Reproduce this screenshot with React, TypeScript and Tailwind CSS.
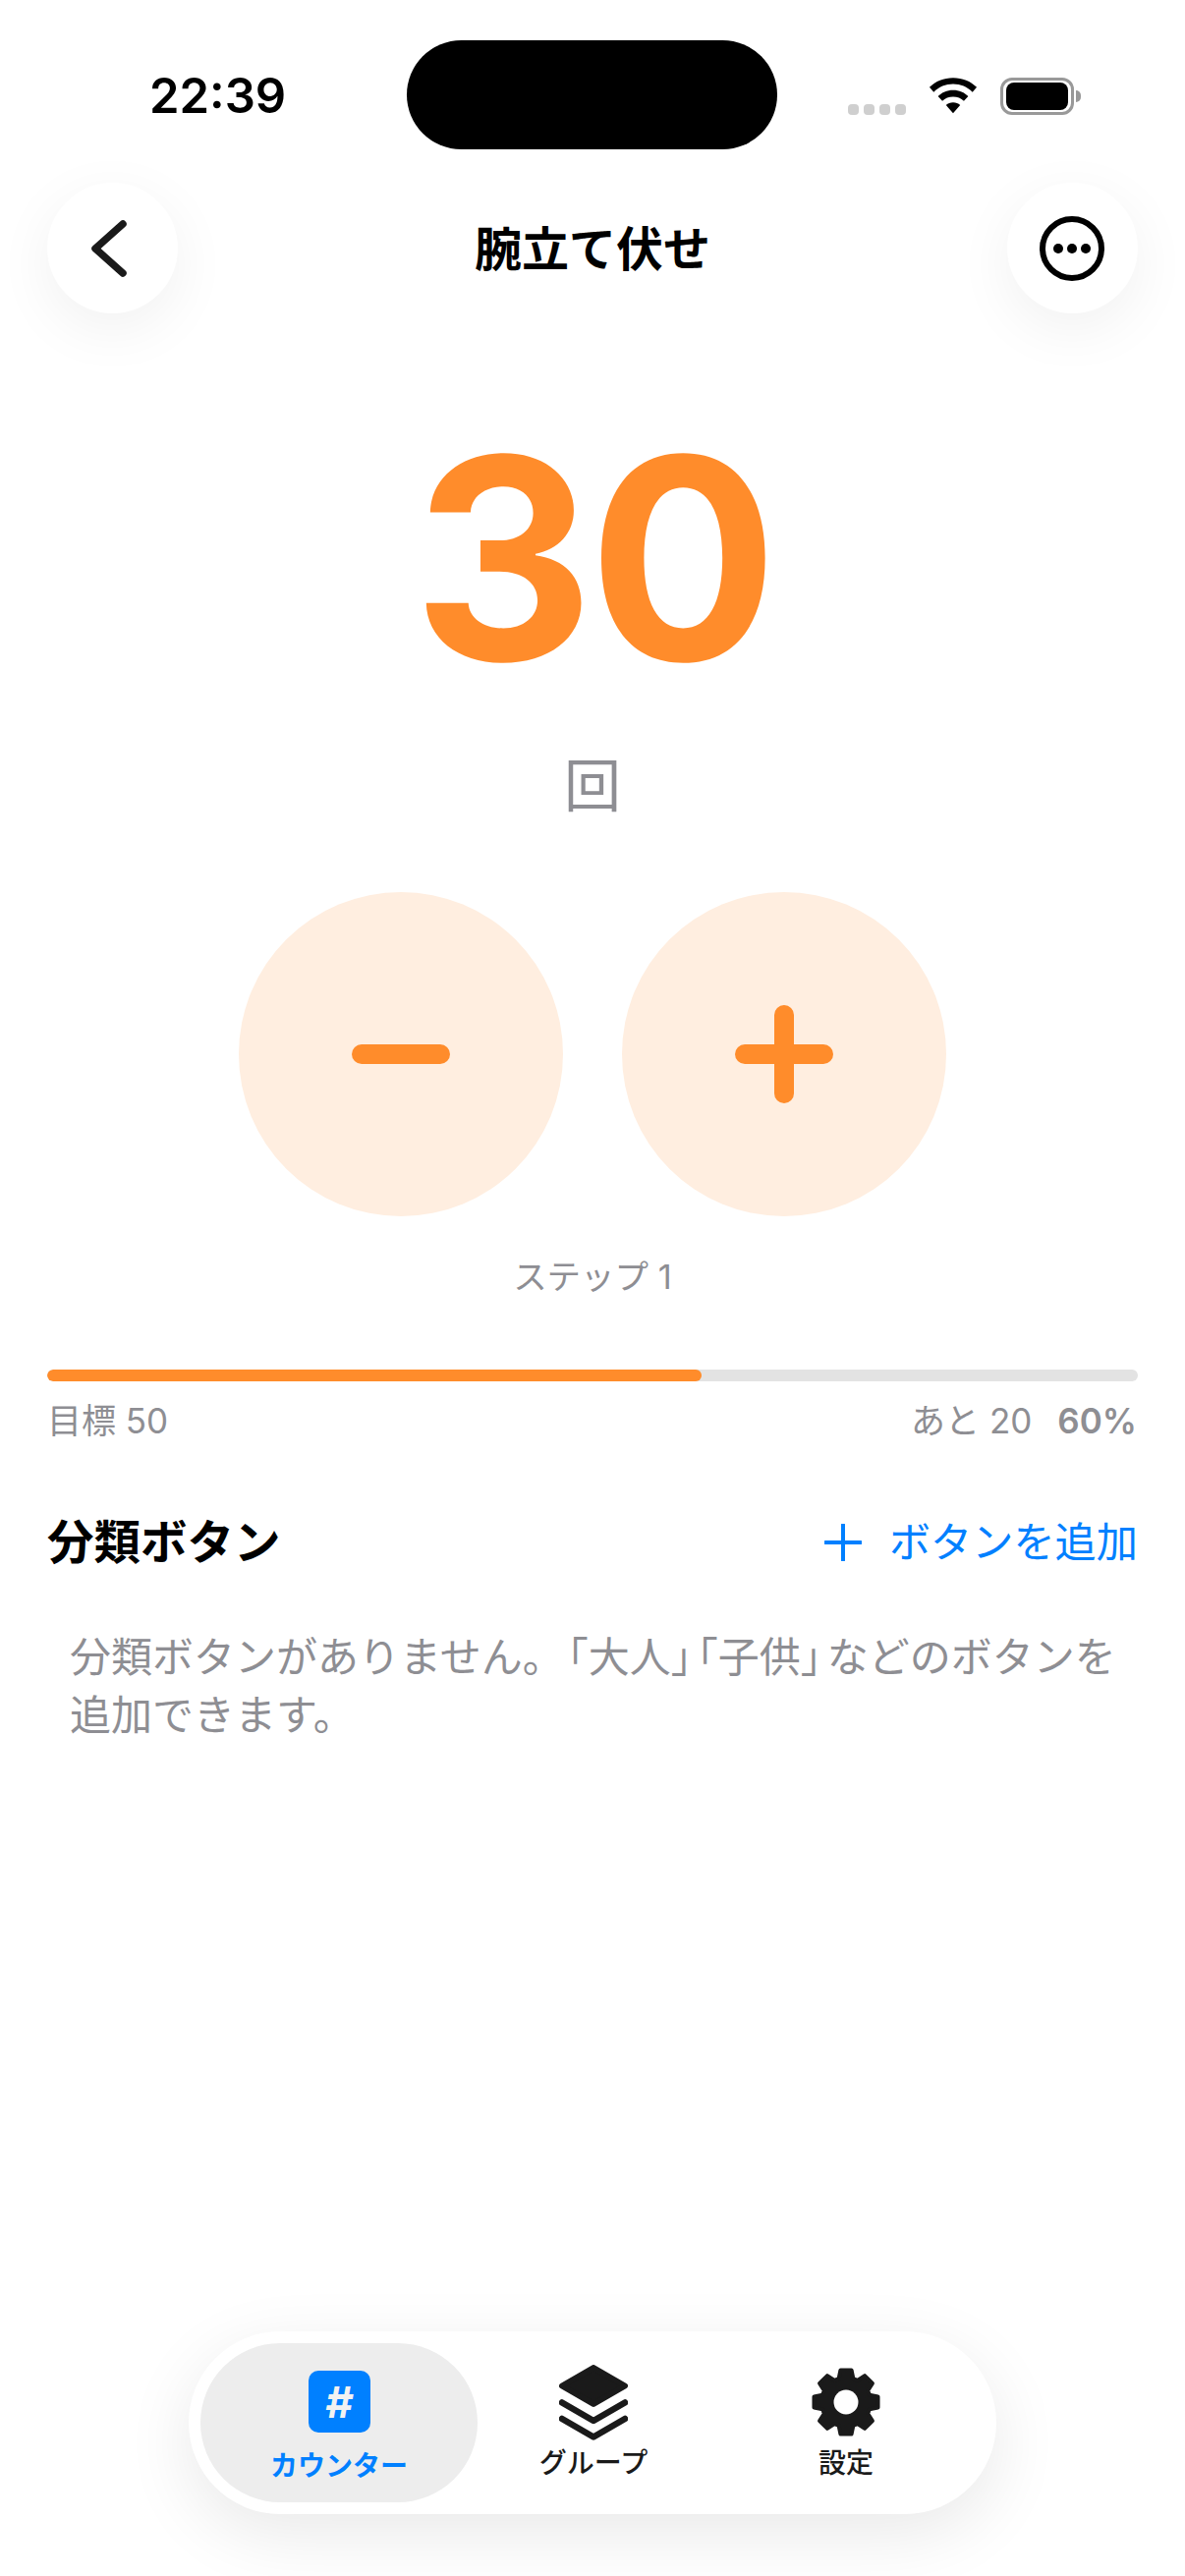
import React from 'react';

const font = "font-['Inter','Noto_Sans_CJK_JP',sans-serif]";

// 8 toothed gear, same outline as the tab icon
const gearPath = () => {
  const pts: string[] = [];
  const teeth = 8;
  for (let i = 0; i < teeth; i++) {
    const a = (i * Math.PI * 2) / teeth - Math.PI / 2;
    const step = [
      [-0.3, 25],
      [-0.17, 33],
      [0.17, 33],
      [0.3, 25],
    ];
    step.forEach(([da, r]) => {
      pts.push(`${(36 + Math.cos(a + da) * r).toFixed(2)},${(36 + Math.sin(a + da) * r).toFixed(2)}`);
    });
  }
  return pts.join(' ');
};

const StatusBar: React.FC = () => (
  <div className="flex h-[152px] items-start pl-[152px] pr-[106px] pt-[41px]">
    <div className="mt-[27px] w-[262px] text-[49px] leading-[60px] font-semibold text-black">22:39</div>
    <div className="h-[111px] w-[377px] rounded-full bg-black" />
    <div className="mt-[37px] ml-auto flex items-center">
      <div className="mt-[28px] mr-[23px] flex gap-[5px]">
        {[0, 1, 2, 3].map((i) => (
          <div key={i} className="h-[11px] w-[11px] rounded-[4px] bg-[#cfcfcf]" />
        ))}
      </div>
      <svg viewBox="0 0 52 38" className="mr-[23px] h-[37px] w-[50px]">
        <path d="M26 0C16 0 7.500 3.600 1 10l4.500 5C11 9.600 18 6.600 26 6.600S41 9.600 46.500 15l4.500-5C44.500 3.600 36 0 26 0z" fill="#000" />
        <path d="M26 13c-6.500 0-12 2.500-16 6.500l4.600 5C17.500 21.600 21.500 20 26 20s8.500 1.600 11.400 4.500l4.600-5C38 15.500 32.500 13 26 13z" fill="#000" />
        <path d="M26 26c-3 0-5.500 1-7.500 3L26 37.500 33.500 29c-2-2-4.500-3-7.500-3z" fill="#000" />
      </svg>
      <div className="flex items-center">
        <div className="flex h-[38px] w-[75px] items-center justify-center rounded-[12px] border-[3px] border-[#999999]">
          <div className="h-[28px] w-[63px] rounded-[8px] bg-black" />
        </div>
        <div className="ml-[2px] h-[12px] w-[5px] rounded-r-full bg-[#999999]" />
      </div>
    </div>
  </div>
);

const CircleButton: React.FC<{ children: React.ReactNode }> = ({ children }) => (
  <button className="flex h-[133px] w-[133px] items-center justify-center rounded-full bg-white shadow-[0_16px_60px_rgba(0,0,0,0.06)]">
    {children}
  </button>
);

const Header: React.FC = () => (
  <div className="mt-[34px] flex items-center justify-between px-[48px]">
    <CircleButton>
      <svg viewBox="0 0 36 58" className="mr-[8px] h-[58px] w-[36px]" fill="none">
        <path d="M32 4 4 29 32 54" stroke="#1a1a1a" strokeWidth="7.500" strokeLinecap="round" strokeLinejoin="round" />
      </svg>
    </CircleButton>
    <h1 className="mt-[2px] text-[48px] leading-[60px] font-bold text-black">腕立て伏せ</h1>
    <CircleButton>
      <svg viewBox="0 0 66 66" className="h-[66px] w-[66px]">
        <circle cx="33" cy="33" r="30" fill="none" stroke="#000" strokeWidth="6" />
        <circle cx="19" cy="33" r="5" fill="#000" />
        <circle cx="33" cy="33" r="5" fill="#000" />
        <circle cx="47" cy="33" r="5" fill="#000" />
      </svg>
    </CircleButton>
  </div>
);

const Counter: React.FC = () => (
  <div className="flex flex-col items-center">
    <div className="mt-[99px] h-[300px] text-[286px] leading-[300px] font-bold tracking-[-0.02em] text-[#ff8c2b]">30</div>
    <div className="mt-[42px] text-[58px] leading-[80px] text-[#8e8e93]">回</div>
    <div className="mt-[68px] flex gap-[60px]">
      <button className="flex h-[330px] w-[330px] items-center justify-center rounded-full bg-[#ffeee0]">
        <div className="h-[20px] w-[100px] rounded-full bg-[#ff8c2b]" />
      </button>
      <button className="relative flex h-[330px] w-[330px] items-center justify-center rounded-full bg-[#ffeee0]">
        <div className="h-[20px] w-[100px] rounded-full bg-[#ff8c2b]" />
        <div className="absolute h-[100px] w-[20px] rounded-full bg-[#ff8c2b]" />
      </button>
    </div>
    <div className="mt-[40px] text-[34.500px] leading-[44px] text-[#8e8e93]">ステップ 1</div>
  </div>
);

const Progress: React.FC = () => (
  <div className="mt-[72px] px-[48px]">
    <div className="h-[12px] w-full overflow-hidden rounded-full bg-[#e3e3e3]">
      <div className="h-full w-[60%] rounded-full bg-[#ff8c2b]" />
    </div>
    <div className="mt-[16px] flex items-center justify-between pr-[1px] text-[35px] leading-[48px] text-[#8e8e93]">
      <span>目標 50</span>
      <span className="flex gap-[26px]">
        <span>あと 20</span>
        <span className="font-semibold">60%</span>
      </span>
    </div>
  </div>
);

const Categories: React.FC = () => (
  <div className="mt-[68px] px-[48px]">
    <div className="flex items-center justify-between">
      <h2 className="text-[47.500px] leading-[64px] font-bold text-black">分類ボタン</h2>
      <button className="flex items-center gap-[28px] text-[42.200px] leading-[64px] text-[#0080ff]">
        <svg viewBox="0 0 38 38" className="h-[38px] w-[38px]">
          <path d="M19 1v36M1 19h36" stroke="#0080ff" strokeWidth="4" strokeLinecap="round" />
        </svg>
        <span>ボタンを追加</span>
      </button>
    </div>
    <p className="mt-[55px] px-[23px] text-[42px] leading-[59px] whitespace-nowrap text-[#8e8e93]">
      分類ボタンがありません。
      <span className="mr-[6px] ml-[4px] [font-feature-settings:'halt']">「大人」</span>
      <span className="mr-[6px] [font-feature-settings:'halt']">「子供」</span>
      などのボタンを
      <br />
      追加できます。
    </p>
  </div>
);

const TabBar: React.FC = () => (
  <div className="mt-auto mb-[63px] flex justify-center">
    <div className="grid h-[186px] w-[822px] grid-cols-[282px_236px_278px] rounded-full bg-white p-[12px] shadow-[0_20px_70px_rgba(0,0,0,0.09)]">
      <div className="flex flex-col items-center rounded-full bg-[#ededed] pt-[28px]">
        <div className="flex h-[63px] w-[63px] items-center justify-center rounded-[10px] bg-[#0080ff] text-[44px] leading-none font-bold text-[#f2f2f2] italic">#</div>
        <span className="mt-[16px] text-[28px] leading-[36px] font-semibold text-[#0080ff]">カウンター</span>
      </div>
      <div className="flex flex-col items-center pt-[22px]">
        <svg viewBox="0 0 70 77" className="h-[77px] w-[70px]" fill="none">
          <path d="M35 3 67 21.500 35 40 3 21.500z" fill="#1a1a1a" stroke="#1a1a1a" strokeWidth="6" strokeLinejoin="round" />
          <path d="M3 38.500 35 57 67 38.500" stroke="#1a1a1a" strokeWidth="6.500" strokeLinejoin="round" strokeLinecap="round" />
          <path d="M3 55 35 73.500 67 55" stroke="#1a1a1a" strokeWidth="6.500" strokeLinejoin="round" strokeLinecap="round" />
        </svg>
        <span className="mt-[5px] text-[28px] leading-[36px] font-medium text-[#1a1a1a]">グループ</span>
      </div>
      <div className="flex flex-col items-center pt-[24px]">
        <svg viewBox="0 0 72 72" className="h-[72px] w-[72px]">
          <polygon points={gearPath()} fill="#1a1a1a" stroke="#1a1a1a" strokeWidth="4" strokeLinejoin="round" />
          <circle cx="36" cy="36" r="12.500" fill="#fff" />
        </svg>
        <span className="mt-[8px] text-[28px] leading-[36px] font-medium text-[#1a1a1a]">設定</span>
      </div>
    </div>
  </div>
);

export default function App() {
  return (
    <div className={`flex h-[2622px] w-[1206px] flex-col overflow-hidden bg-white ${font}`}>
      <StatusBar />
      <Header />
      <Counter />
      <Progress />
      <Categories />
      <TabBar />
    </div>
  );
}
